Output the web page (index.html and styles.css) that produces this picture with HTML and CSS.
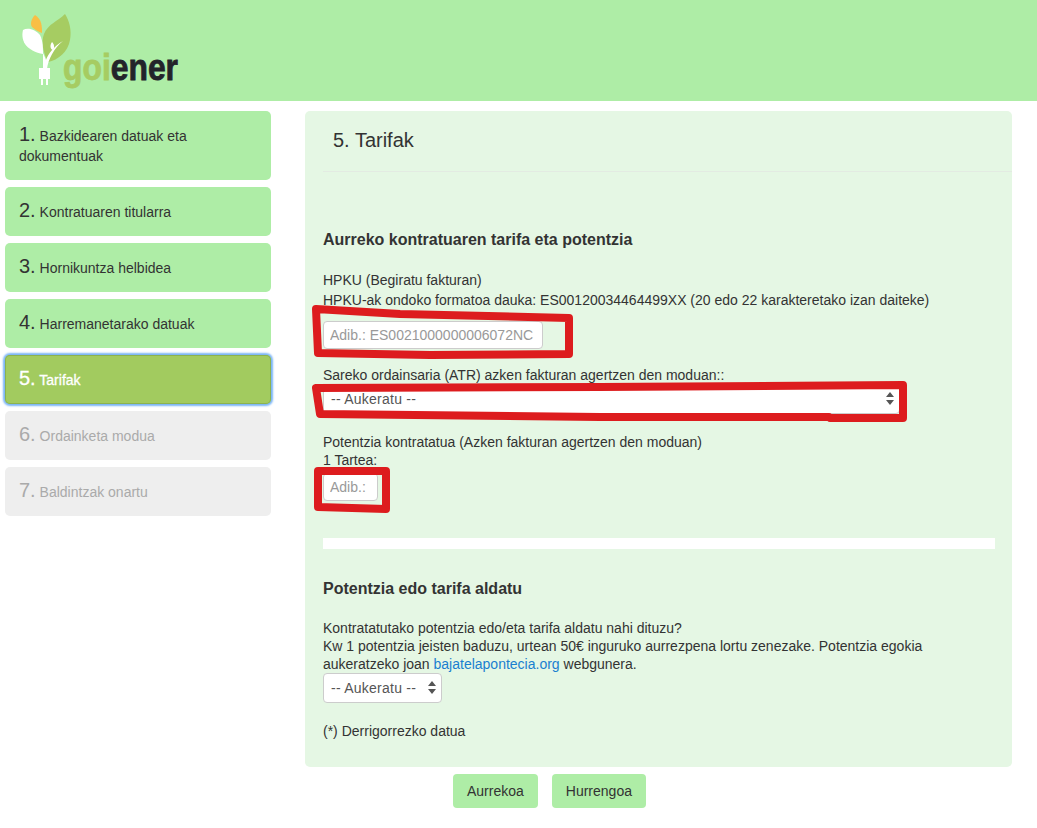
FILE: index.html
```html
<!DOCTYPE html>
<html lang="en">
<head>
    <meta charset="UTF-8">
    <meta name="viewport" content="width=device-width, initial-scale=1.0">
    <title>Goiener - Tarifak</title>
    <link rel="stylesheet" href="styles.css">
</head>
<body>

<header class="site-header">
    <svg class="logo" width="170" height="80" viewBox="0 0 170 80">
        <path d="M13 5 C9 9 8 14 10 17 C13 20 17 22 20 23 C20 17 20 9 13 5 Z" fill="#f9bf45"/>
        <path d="M43 4 C36 11 26 14 22 24 C19 32 21 42 26 52 C36 50 46 42 48 30 C50 20 47 10 43 4 Z" fill="#a6cc62"/>
        <path d="M1 20 C6 17 14 20 18 25 C21 31 21 38 21 44 C14 43 6 39 3 34 C0 29 0 24 1 20 Z" fill="#fff"/>
        <path d="M30 32 C32 34 33 37 31 40 C29 40 27 36 30 32 Z" fill="#fff"/>
        <path d="M21 43 L21 59 L25 59 C26 50 32 38 41 31 C32 36 26 44 24 50 C23 47 22 45 21 43 Z" fill="#fff"/>
        <path d="M17 58 H28 V69 H26 V75 H24 V69 H21 V75 H19 V69 H17 Z" fill="#fff"/>
        <text class="logo-word" x="41" y="70" textLength="115" lengthAdjust="spacingAndGlyphs"><tspan class="logo-goi">goi</tspan><tspan class="logo-ener">ener</tspan></text>
    </svg>
</header>

<div class="layout">
    <nav class="steps">
        <div class="step"><span class="num">1.</span> Bazkidearen datuak eta dokumentuak</div>
        <div class="step"><span class="num">2.</span> Kontratuaren titularra</div>
        <div class="step"><span class="num">3.</span> Hornikuntza helbidea</div>
        <div class="step"><span class="num">4.</span> Harremanetarako datuak</div>
        <div class="step active"><span class="num">5.</span> Tarifak</div>
        <div class="step disabled"><span class="num">6.</span> Ordainketa modua</div>
        <div class="step disabled"><span class="num">7.</span> Baldintzak onartu</div>
    </nav>

    <main class="content">
        <section class="panel">
            <div class="panel-head">
                <h2 class="panel-title">5. Tarifak</h2>
            </div>
            <div class="panel-body">
                <h3 class="section-title">Aurreko kontratuaren tarifa eta potentzia</h3>
                <p class="hpku-text">HPKU (Begiratu fakturan)<br>HPKU-ak ondoko formatoa dauka: ES00120034464499XX (20 edo 22 karakteretako izan daiteke)</p>
                <input class="field field-hpku" type="text" placeholder="Adib.: ES0021000000006072NC">

                <p class="atr-label">Sareko ordainsaria (ATR) azken fakturan agertzen den moduan::</p>
                <div class="select-wrap select-atr">
                    <select class="field field-select"><option>-- Aukeratu --</option></select>
                    <svg class="arrows" width="8" height="13" viewBox="0 0 8 13"><path d="M4 0 L8 5 H0 Z M0 8 H8 L4 13 Z"/></svg>
                </div>

                <p class="power-label">Potentzia kontratatua (Azken fakturan agertzen den moduan)<br>1 Tartea:</p>
                <input class="field field-power" type="text" placeholder="Adib.:">

                <div class="white-bar"></div>

                <h3 class="section-title">Potentzia edo tarifa aldatu</h3>
                <p class="change-text">Kontratatutako potentzia edo/eta tarifa aldatu nahi dituzu?<br>Kw 1 potentzia jeisten baduzu, urtean 50€ inguruko aurrezpena lortu zenezake. Potentzia egokia aukeratzeko joan <a href="#">bajatelapontecia.org</a> webgunera.</p>
                <div class="select-wrap select-change">
                    <select class="field field-select"><option>-- Aukeratu --</option></select>
                    <svg class="arrows" width="8" height="13" viewBox="0 0 8 13"><path d="M4 0 L8 5 H0 Z M0 8 H8 L4 13 Z"/></svg>
                </div>

                <p class="required-note">(*) Derrigorrezko datua</p>
            </div>
        </section>

        <div class="actions">
            <button class="btn">Aurrekoa</button>
            <button class="btn">Hurrengoa</button>
        </div>
    </main>
</div>

<!-- red marker drawn over the screenshot -->
<svg class="marker" width="1037" height="828" viewBox="0 0 1037 828">
    <path d="M316 309 L400 314 L569 318 L569 354 L430 355 L318 353 Z"/>
    <path d="M316 388 L600 387 L903 385 L903 418 L830 418 L829 417 L600 417 L320 414 Z"/>
    <path d="M318 471 L386 471 L386 509 L318 507 Z"/>
</svg>

</body>
</html>
```

FILE: styles.css
```css
* {
    box-sizing: border-box;
}
body {
    margin: 0;
    position: relative;
    font-family: "Liberation Sans", Arial, sans-serif;
    font-size: 14px;
    line-height: 20px;
    color: #333;
    background-color: #fff;
}
.site-header {
    height: 101px;
    padding: 10px 0 0 22px;
    background-color: #aeeda6;
}
.logo {
    display: block;
}
.logo-word {
    font-family: "Liberation Sans", Arial, sans-serif;
    font-size: 36px;
    font-weight: 700;
    stroke-width: 0.8px;
}
.logo-goi {
    fill: #a6cc62;
    stroke: #a6cc62;
}
.logo-ener {
    fill: #23242a;
    stroke: #23242a;
}
.layout {
    display: flex;
    align-items: flex-start;
    padding: 10px 25px 0 5px;
    gap: 34px;
}
.steps {
    display: flex;
    flex-direction: column;
    gap: 7px;
    width: 266px;
    flex-shrink: 0;
}
.step {
    padding: 15px 14px 14px;
    border-radius: 5px;
    background-color: #aeeda6;
}
.step .num {
    font-size: 20px;
    line-height: 16px;
}
.step.active {
    color: #fff;
    background-color: #a2cb5f;
    box-shadow: inset 0 0 0 1px #8cb24f, 0 0 2px 2px #7ab5f5;
    -webkit-text-stroke: 0.3px #fff;
}
.step.disabled {
    color: #aaa;
    background-color: #eee;
}
.content {
    flex: 1;
}
.panel {
    height: 656px;
    border-radius: 5px;
    background-color: #e5f7e4;
}
.panel-head {
    height: 61px;
    margin-left: 18px;
    padding: 18px 10px 0;
    border-bottom: 1px solid #e3ebe2;
}
.panel-title {
    margin: 0;
    font-size: 20px;
    line-height: 22px;
    font-weight: 400;
}
.panel-body {
    padding: 59px 17px 0 18px;
}
.section-title {
    margin: 0;
    font-size: 16px;
    line-height: 18px;
    font-weight: 700;
}
p {
    margin: 0;
}
.hpku-text {
    margin-top: 21px;
}
.field {
    display: block;
    font-family: "Liberation Sans", Arial, sans-serif;
    font-size: 14px;
    color: #555;
    background-color: #fff;
    border: 1px solid #ccc;
    border-radius: 4px;
}
.field::placeholder {
    color: #999;
}
.field-hpku {
    width: 220px;
    height: 28px;
    margin-top: 11px;
    padding: 0 6px;
}
.atr-label {
    margin-top: 16px;
}
.select-wrap {
    position: relative;
}
.select-atr {
    width: 577px;
    margin-top: -1px;
}
.field-select {
    width: 100%;
    height: 30px;
    padding: 0 7px;
    letter-spacing: 0.25px;
    appearance: none;
}
.arrows {
    position: absolute;
    right: 6px;
    top: 8px;
    fill: #555;
}
.power-label {
    margin-top: 19px;
    line-height: 18px;
}
.field-power {
    width: 55px;
    height: 28px;
    margin-top: 4px;
    padding: 0 6px;
}
.white-bar {
    height: 11px;
    margin: 37px 0 31px;
    background-color: #fff;
}
.change-text {
    margin-top: 21px;
    line-height: 18px;
}
.change-text a {
    color: #1a7fd0;
    text-decoration: none;
}
.select-change {
    width: 119px;
}
.required-note {
    margin-top: 18px;
}
.actions {
    display: flex;
    gap: 14px;
    margin-top: 7px;
    margin-left: 148px;
}
.btn {
    height: 34px;
    padding: 0 14px;
    font-family: "Liberation Sans", Arial, sans-serif;
    font-size: 14px;
    color: #333;
    background-color: #aeeda6;
    border: none;
    border-radius: 4px;
}
.marker {
    position: absolute;
    top: 0;
    left: 0;
    fill: none;
    stroke: #dd1c1e;
    stroke-width: 8;
    stroke-linejoin: round;
    pointer-events: none;
}
```
